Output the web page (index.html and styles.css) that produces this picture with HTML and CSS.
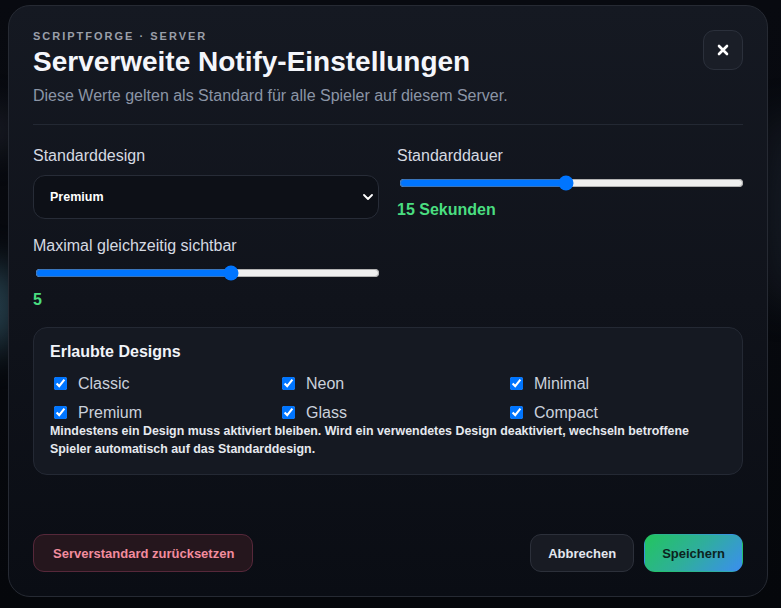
FILE: index.html
```html
<!DOCTYPE html>
<html lang="de">
<head>
<meta charset="utf-8">
<title>Serverweite Notify-Einstellungen</title>
<link rel="stylesheet" href="styles.css">
</head>
<body>
<div class="backdrop">
  <div class="glow glow-a"></div>
  <div class="glow glow-b"></div>
  <div class="glow glow-c"></div>
  <section class="modal">
    <header class="modal-head">
      <div class="head-text">
        <div class="eyebrow">SCRIPTFORGE · SERVER</div>
        <h1 class="title">Serverweite Notify-Einstellungen</h1>
        <p class="subtitle">Diese Werte gelten als Standard für alle Spieler auf diesem Server.</p>
      </div>
      <button class="close-btn" type="button" aria-label="Schließen">
        <svg width="12" height="12" viewBox="0 0 12 12"><path d="M2 2 L10 10 M10 2 L2 10" stroke="#ffffff" stroke-width="2.6" stroke-linecap="round"/></svg>
      </button>
    </header>

    <div class="fields">
      <div class="field">
        <label class="field-label">Standarddesign</label>
        <div class="select-wrap">
          <select class="select">
            <option>Premium</option>
          </select>
          <svg class="chevron" width="10" height="6" viewBox="0 0 10 6"><path d="M1 1 L5 5 L9 1" fill="none" stroke="#ffffff" stroke-width="1.8" stroke-linecap="round" stroke-linejoin="round"/></svg>
        </div>
      </div>
      <div class="field">
        <label class="field-label">Standarddauer</label>
        <input class="range" type="range" min="1" max="30" value="15">
        <div class="value">15 Sekunden</div>
      </div>
      <div class="field">
        <label class="field-label">Maximal gleichzeitig sichtbar</label>
        <input class="range" type="range" min="1" max="8" value="5">
        <div class="value">5</div>
      </div>
    </div>

    <div class="card">
      <div class="card-title">Erlaubte Designs</div>
      <div class="checks">
        <label class="check"><input type="checkbox" checked><span>Classic</span></label>
        <label class="check"><input type="checkbox" checked><span>Neon</span></label>
        <label class="check"><input type="checkbox" checked><span>Minimal</span></label>
        <label class="check"><input type="checkbox" checked><span>Premium</span></label>
        <label class="check"><input type="checkbox" checked><span>Glass</span></label>
        <label class="check"><input type="checkbox" checked><span>Compact</span></label>
      </div>
      <p class="note">Mindestens ein Design muss aktiviert bleiben. Wird ein verwendetes Design deaktiviert, wechseln betroffene Spieler automatisch auf das Standarddesign.</p>
    </div>

    <footer class="modal-foot">
      <button class="btn btn-danger" type="button">Serverstandard zurücksetzen</button>
      <div class="foot-right">
        <button class="btn btn-ghost" type="button">Abbrechen</button>
        <button class="btn btn-primary" type="button">Speichern</button>
      </div>
    </footer>
  </section>
</div>
</body>
</html>
```

FILE: styles.css
```css
* { box-sizing: border-box; }

html, body {
  margin: 0;
  padding: 0;
  width: 781px;
  height: 608px;
  overflow: hidden;
  background: #05070b;
  font-family: "Liberation Sans", Arial, sans-serif;
}

.backdrop {
  position: relative;
  width: 781px;
  height: 608px;
  padding: 5px 0 0 8px;
  background: linear-gradient(180deg, #080a10 0%, #05070b 100%);
}

.glow {
  position: absolute;
  border-radius: 50%;
  filter: blur(18px);
}
.glow-a { left: -40px; top: 262px; width: 60px; height: 90px; background: rgba(70, 120, 140, 0.5); }
.glow-b { left: -40px; top: 110px; width: 60px; height: 40px; background: rgba(90, 100, 120, 0.25); }
.glow-c { right: -30px; top: 110px; width: 50px; height: 200px; background: rgba(60, 70, 90, 0.25); }

.modal {
  position: relative;
  width: 760px;
  height: 592px;
  border: 1px solid #262a33;
  border-radius: 22px;
  background: linear-gradient(180deg, #151922 0%, #10131b 50%, #0a0d14 100%);
  padding: 24px;
  display: flex;
  flex-direction: column;
}

.modal-head {
  display: flex;
  justify-content: space-between;
  align-items: flex-start;
  padding-bottom: 19px;
  border-bottom: 1px solid #232833;
}

.eyebrow {
  font-size: 11px;
  font-weight: 700;
  letter-spacing: 2px;
  color: #9a9fa9;
}

.title {
  margin: 4px 0 0;
  font-size: 28px;
  font-weight: 700;
  color: #f4f6fb;
}

.subtitle {
  margin: 9px 0 0;
  font-size: 16px;
  color: #8b95a6;
}

.close-btn {
  width: 40px;
  height: 40px;
  border-radius: 11px;
  border: 1px solid #2b303b;
  background: #1a1e27;
  display: flex;
  align-items: center;
  justify-content: center;
  padding: 0;
}

.fields {
  margin-top: 22px;
  display: grid;
  grid-template-columns: 1fr 1fr;
  gap: 18px;
}

.field {
  display: flex;
  flex-direction: column;
  gap: 10px;
}

.field-label {
  font-size: 16px;
  color: #d6dae2;
}

.select-wrap {
  position: relative;
}

.select {
  appearance: none;
  -webkit-appearance: none;
  width: 100%;
  height: 44px;
  border-radius: 12px;
  border: 1px solid #272c37;
  background: #0d1017;
  color: #ffffff;
  font-family: "Liberation Sans", Arial, sans-serif;
  font-size: 12.5px;
  font-weight: 700;
  padding: 0 16px;
  outline: none;
}

.chevron {
  position: absolute;
  right: 6px;
  top: 19px;
}

.range {
  margin: 0 0 0 2px;
  width: calc(100% - 1px);
  height: 16px;
}

.value {
  font-size: 16px;
  font-weight: 700;
  color: #4ade80;
}

.card {
  margin-top: 18px;
  border: 1px solid #242934;
  border-radius: 14px;
  background: #151922;
  padding: 15px 16px 16px;
}

.card-title {
  font-size: 16px;
  font-weight: 700;
  color: #f1f4f9;
}

.checks {
  margin-top: 13px;
  display: grid;
  grid-template-columns: repeat(3, 1fr);
  column-gap: 8px;
  row-gap: 10px;
}

.check {
  display: flex;
  align-items: center;
  gap: 8px;
  font-size: 16px;
  color: #cbd1dc;
  height: 19px;
}

.check input {
  margin: 3px 3px 3px 4px;
}

.note {
  margin: 0;
  font-size: 12.4px;
  line-height: 18px;
  font-weight: 700;
  color: #e6e9ef;
}

.modal-foot {
  margin-top: auto;
  display: flex;
  justify-content: space-between;
  align-items: center;
}

.foot-right {
  display: flex;
  gap: 10px;
}

.btn {
  height: 38px;
  border-radius: 11px;
  padding: 0 17px;
  font-family: "Liberation Sans", Arial, sans-serif;
  font-size: 13px;
  font-weight: 700;
  border: 1px solid transparent;
}

.btn-danger {
  padding: 0 18px 0 19px;
  background: #25161d;
  border-color: #56283a;
  color: #f28c9e;
}

.btn-ghost {
  background: #181b23;
  border-color: #2c303a;
  color: #e3e7ef;
}

.btn-primary {
  background: linear-gradient(135deg, #22c55e 0%, #2fae9c 50%, #3b8ef0 100%);
  color: #0c2320;
}
```
